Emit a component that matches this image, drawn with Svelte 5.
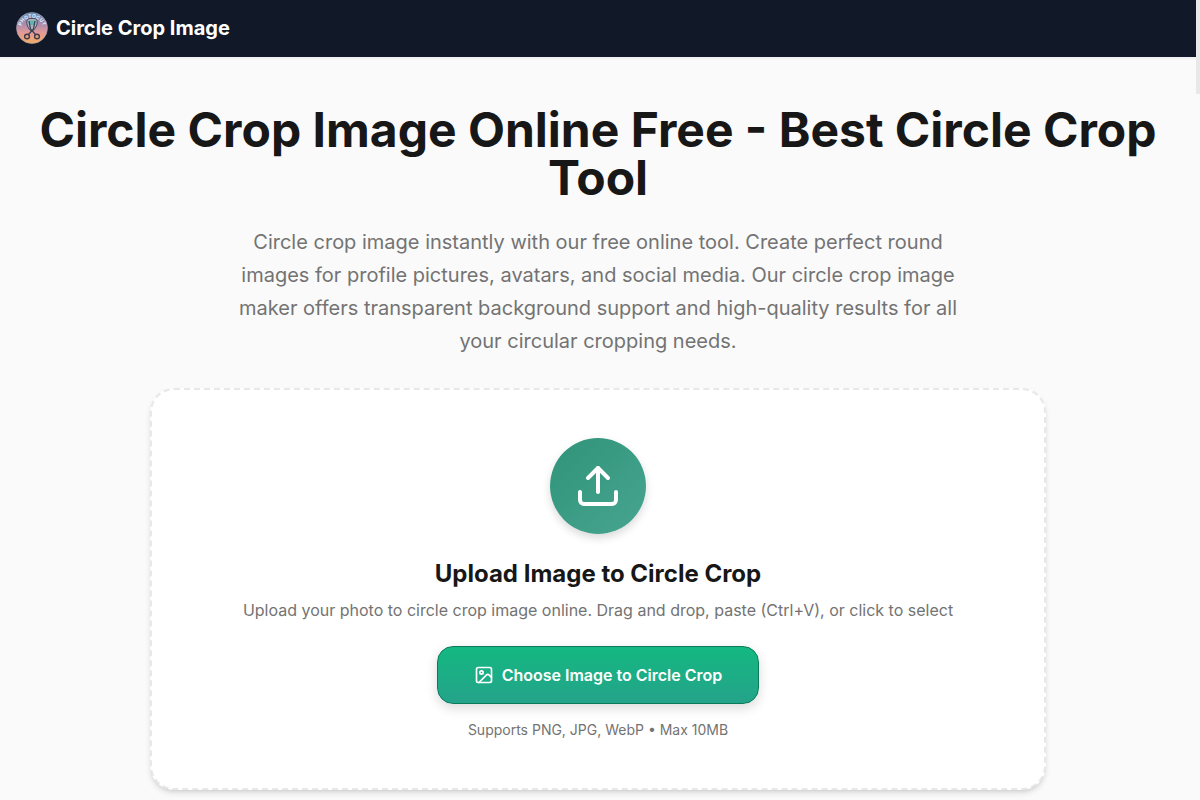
<script>
  const title = 'Circle Crop Image';
  const formats = ['PNG', 'JPG', 'WebP'];
  let fileInput;
  let dragging = false;

  function pickFile() {
    fileInput.click();
  }

  function handleDrop(event) {
    dragging = false;
    fileInput.files = event.dataTransfer.files;
  }
</script>

<div class="page">
  <header>
    <a class="brand" href="/">
      <svg class="logo" viewBox="0 0 32 32" aria-hidden="true">
        <defs>
          <linearGradient id="sky" x1="0" y1="0" x2="0" y2="1">
            <stop offset="0" stop-color="#5b8db8" />
            <stop offset="0.35" stop-color="#a58bb0" />
            <stop offset="0.65" stop-color="#e39a98" />
            <stop offset="1" stop-color="#f2ad62" />
          </linearGradient>
          <path id="arc" d="M5.5 13.500 A11 11 0 0 1 26.500 13.500" />
        </defs>
        <circle cx="16" cy="16" r="15.5" fill="url(#sky)" stroke="#a9a4b4" stroke-width="0.6" />
        <text class="logo-text"><textPath href="#arc" startOffset="50%" text-anchor="middle">PHOTOCUT</textPath></text>
        <path d="M11 8 Q9.5 14 15.8 20 Q22.5 14 21 8 Q19.500 6 16 6.500 Q12.500 6 11 8Z" fill="#b5b0b8" stroke="#3d4358" stroke-width="0.9" />
        <path d="M13 8.500 H19 L18 13 H14Z" fill="#59b8b5" />
        <path d="M13 9 L14.500 17 L19.500 22.500 M19 9 L17.500 17 L12.500 22.500" stroke="#394057" stroke-width="1.300" fill="none" />
        <g fill="none" stroke="#41384a" stroke-width="1.400">
          <ellipse cx="11" cy="24.500" rx="2.400" ry="2.200" />
          <ellipse cx="21" cy="24.500" rx="2.400" ry="2.200" />
        </g>
      </svg>
      <span>{title}</span>
    </a>
  </header>

  <main>
    <h1>Circle Crop Image Online Free - Best Circle Crop Tool</h1>
    <p class="intro">
      Circle crop image instantly with our free online tool. Create perfect round images for
      profile pictures, avatars, and social media. Our circle crop image maker offers transparent
      background support and high-quality results for all your circular cropping needs.
    </p>

    <section
      class="dropzone"
      class:dragging
      aria-label="Upload image"
      on:dragover|preventDefault={() => (dragging = true)}
      on:dragleave={() => (dragging = false)}
      on:drop|preventDefault={handleDrop}
    >
      <div class="upload-icon">
        <svg viewBox="0 0 24 24" aria-hidden="true">
          <path d="M3 15v4a2 2 0 0 0 2 2h14a2 2 0 0 0 2-2v-4" />
          <path d="M17 8l-5-5-5 5" />
          <path d="M12 3v12" />
        </svg>
      </div>
      <h2>Upload Image to Circle Crop</h2>
      <p class="hint">Upload your photo to circle crop image online. Drag and drop, paste (Ctrl+V), or click to select</p>
      <input type="file" accept="image/*" aria-label="Choose image" hidden bind:this={fileInput} />
      <button type="button" on:click={pickFile}>
        <svg viewBox="0 0 24 24" aria-hidden="true">
          <rect x="3" y="3" width="18" height="18" rx="2" />
          <circle cx="9" cy="9" r="2" />
          <path d="m21 15-3.086-3.086a2 2 0 0 0-2.828 0L6 21" />
        </svg>
        Choose Image to Circle Crop
      </button>
      <p class="formats">Supports {formats.join(', ')} • Max 10MB</p>
    </section>
  </main>
</div>
<div class="scroll-thumb"></div>

<style>
  :global(body) {
    background: #fafafa;
    overflow: hidden;
  }

  .page {
    margin-right: 4px;
    font-family: Inter, "Liberation Sans", sans-serif;
    color: #171717;
  }

  /* thin scroll indicator over the window edge */
  .scroll-thumb {
    position: fixed;
    top: 0;
    right: 0;
    width: 4px;
    height: 94px;
    background: #e8e8e8;
  }

  header {
    padding: 12px 16px 13px;
    background: #111827;
    background-clip: padding-box;
    border-bottom: 1px solid #eef0f4;
    box-shadow: 0 1px 2px rgba(0, 0, 0, 0.05);
  }

  .brand {
    display: flex;
    align-items: center;
    gap: 8px;
    color: #fff;
    font-size: 20px;
    line-height: 28px;
    font-weight: 700;
    text-decoration: none;
  }

  .logo {
    width: 32px;
    height: 32px;
  }

  .logo-text {
    font-size: 5px;
    font-weight: 700;
    fill: #e8f1f8;
  }

  main {
    padding: 48px 16px;
    text-align: center;
  }

  h1,
  h2,
  p {
    margin: 0;
  }

  h1 {
    font-size: 48px;
    line-height: 48px;
    font-weight: 700;
  }

  .intro {
    max-width: 752px;
    margin: 24px auto 30px;
    color: #737373;
    font-size: 20px;
    line-height: 33px;
  }

  .dropzone {
    box-sizing: border-box;
    display: flex;
    flex-direction: column;
    align-items: center;
    max-width: 896px;
    margin: 0 auto;
    padding: 48px;
    background: #fff;
    border: 2px dashed #e8e8e8;
    border-radius: 24px;
    box-shadow: 0 4px 6px -1px rgba(0, 0, 0, 0.12), 0 2px 4px -2px rgba(0, 0, 0, 0.12);
  }

  .dropzone.dragging {
    border-color: #339980;
  }

  .upload-icon {
    display: flex;
    align-items: center;
    justify-content: center;
    width: 96px;
    height: 96px;
    margin-bottom: 24px;
    border-radius: 50%;
    background: linear-gradient(135deg, #2f9379, #48a590);
    box-shadow: 0 4px 8px rgba(0, 0, 0, 0.15);
  }

  svg {
    flex: none;
  }

  .upload-icon svg,
  button svg {
    fill: none;
    stroke: currentColor;
    stroke-width: 2;
    stroke-linecap: round;
    stroke-linejoin: round;
  }

  .upload-icon svg {
    width: 48px;
    height: 48px;
    color: #fff;
  }

  h2 {
    margin-bottom: 8px;
    font-size: 24px;
    line-height: 32px;
    font-weight: 700;
  }

  .hint {
    margin-bottom: 24px;
    color: #737373;
    font-size: 16px;
    line-height: 24px;
  }

  button {
    display: flex;
    align-items: center;
    gap: 8px;
    margin-bottom: 16px;
    padding: 16px 36px;
    color: #fff;
    font-family: inherit;
    font-size: 16px;
    line-height: 24px;
    font-weight: 600;
    background: linear-gradient(#14b881, #24a38a);
    border: 1px solid #0a7a58;
    border-radius: 16px;
    box-shadow: 0 4px 12px rgba(0, 0, 0, 0.15);
    cursor: pointer;
  }

  button svg {
    width: 20px;
    height: 20px;
  }

  .formats {
    color: #737373;
    font-size: 14px;
    line-height: 20px;
  }
</style>
